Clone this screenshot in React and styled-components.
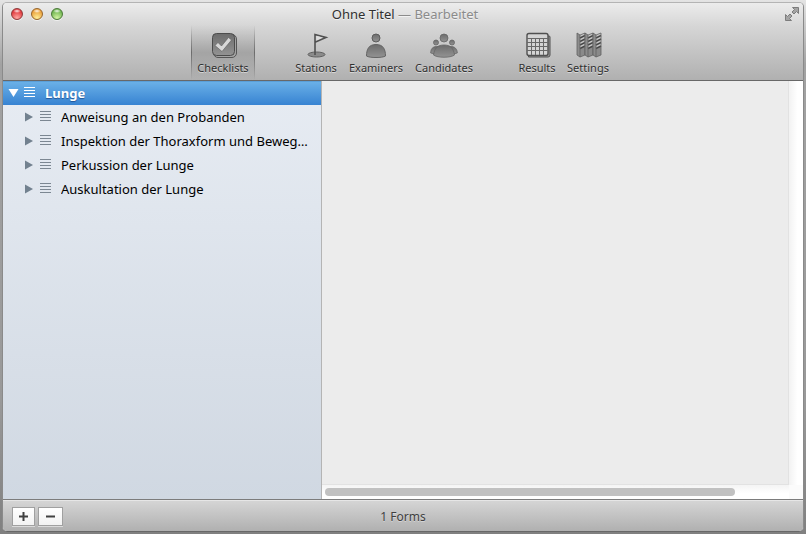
import React, { useState } from "react";
import styled, { createGlobalStyle, css } from "styled-components";

const GlobalStyle = createGlobalStyle`
  *, *::before, *::after { box-sizing: border-box; }
  body {
    margin: 0;
    background: linear-gradient(#e4e4e4, #a2a2a2 12%, #999 75%, #808080);
    font-family: "Noto Sans", "Open Sans", sans-serif;
    font-size: 13px;
    color: #000;
  }
  button { font: inherit; color: inherit; margin: 0; }
`;

const Desktop = styled.div`
  display: flex;
  height: 100vh;
  padding: 2px;
`;

const Window = styled.div`
  display: flex;
  flex-direction: column;
  flex: 1;
  min-width: 0;
  border: 1px solid #8a8a8a;
  border-top-color: #b4b4b4;
  border-bottom-color: #686868;
  border-radius: 5px;
  overflow: hidden;
  background: #ececec;
`;

const Header = styled.header`
  display: flex;
  flex-direction: column;
  height: 78px;
  flex: none;
  background: linear-gradient(#ececec, #d6d6d6 30%, #b0b0b0);
  border-bottom: 1px solid #686868;
`;

const TitleBar = styled.div`
  display: grid;
  grid-template-columns: 1fr auto 1fr;
  align-items: center;
  height: 22px;
  padding: 0 4px 0 8px;
`;

const Lights = styled.div`
  display: flex;
  gap: 8px;
`;

const Light = styled.button`
  display: block;
  width: 12px;
  height: 12px;
  padding: 0;
  border: 1px solid ${(p) => p.$edge};
  border-radius: 50%;
  background:
    radial-gradient(ellipse 4px 2px at 50% 20%, rgba(255, 255, 255, 0.9), transparent),
    radial-gradient(circle at 50% 90%, ${(p) => p.$glow}, ${(p) => p.$tone} 75%);
  box-shadow: 0 1px 0 rgba(255, 255, 255, 0.6);
`;

const Title = styled.h1`
  margin: 0;
  font-size: 13px;
  line-height: 20px;
  font-weight: 400;
  color: #303030;
  text-shadow: 0 1px 0 rgba(255, 255, 255, 0.6);
`;

const Edited = styled.span`
  color: #8b8b8b;
`;

const FullScreen = styled.button`
  justify-self: end;
  display: block;
  padding: 0;
  border: 0;
  background: none;
  height: 14px;
`;

const Toolbar = styled.nav`
  display: grid;
  grid-template-columns: 64px 31px 60px 60px 76px 31px 48px 54px;
  justify-content: center;
  flex: 1;
`;

const Tool = styled.button`
  display: flex;
  flex-direction: column;
  align-items: center;
  grid-column: ${(p) => p.$column};
  padding: 5px 0 0;
  border: 0;
  background: none;
  font-size: 11px;
  line-height: 16px;
  color: #303030;
  text-shadow: 0 1px 0 rgba(255, 255, 255, 0.5);
  white-space: nowrap;
  svg { display: block; margin-bottom: 2px; }
  ${(p) =>
    p.$active &&
    css`
      background:
        linear-gradient(rgba(70, 70, 70, 0), rgba(70, 70, 70, 0.6) 50%, rgba(70, 70, 70, 0)) left / 1px 100% no-repeat,
        linear-gradient(rgba(70, 70, 70, 0), rgba(70, 70, 70, 0.6) 50%, rgba(70, 70, 70, 0)) right / 1px 100% no-repeat,
        linear-gradient(rgba(0, 0, 0, 0), rgba(0, 0, 0, 0.16) 50%, rgba(0, 0, 0, 0));
    `}
`;

const Main = styled.main`
  display: grid;
  grid-template-columns: 319px minmax(0, 1fr);
  flex: 1;
  min-height: 0;
`;

const Sidebar = styled.ul`
  margin: 0;
  padding: 0;
  list-style: none;
  border-right: 1px solid #b4b4b4;
  background: linear-gradient(#e7ecf3, #d0d8e2);
`;

const Row = styled.li`
  display: flex;
  align-items: center;
  height: 24px;
  padding: 0 4px 0 ${(p) => (p.$root ? 4 : 20)}px;
  ${(p) =>
    p.$root &&
    css`
      color: #fff;
      font-weight: 700;
      text-shadow: 0 1px 1px rgba(0, 30, 90, 0.5);
      background: linear-gradient(#6cb2e8, #3783d2);
      box-shadow: inset 0 1px 0 #5a9fd8;
    `}
`;

const Disclosure = styled.button`
  display: block;
  flex: none;
  width: 12px;
  height: 12px;
  padding: 0;
  border: 0;
  background: none;
  color: ${(p) => (p.$root ? "#fff" : "#72818f")};
  svg { display: block; }
`;

const ListMark = styled.svg`
  flex: none;
  margin: 0 9px 0 5px;
  color: ${(p) => (p.$root ? "#fff" : "#7c8792")};
`;

const RowLabel = styled.span`
  min-width: 0;
  font-size: 13px;
  line-height: 20px;
  overflow: hidden;
  text-overflow: ellipsis;
  white-space: nowrap;
`;

const Content = styled.section`
  display: grid;
  grid-template: minmax(0, 1fr) 14px / minmax(0, 1fr) 14px;
  background: #fbfbfb;
`;

const Canvas = styled.div`
  background: #ececec;
  border: solid #e2e2e2;
  border-width: 0 1px 1px 0;
`;

const VerticalTrack = styled.div`
  background: linear-gradient(90deg, #f2f2f2, #fff 60%);
`;

const HorizontalTrack = styled.div`
  padding: 3px;
  background: linear-gradient(#f4f4f4, #fff 60%);
`;

const Thumb = styled.div`
  width: 89%;
  height: 8px;
  border-radius: 4px;
  background: #c1c1c1;
`;

const Footer = styled.footer`
  display: grid;
  grid-template-columns: 1fr auto 1fr;
  align-items: center;
  flex: none;
  height: 32px;
  padding: 2px 9px 0;
  border-top: 1px solid #7c7c7c;
  background: linear-gradient(#d6d6d6, #b0b0b0);
  box-shadow: inset 0 1px 0 #e6e6e6;
`;

const Actions = styled.div`
  display: flex;
  gap: 3px;
`;

const SquareButton = styled.button`
  display: flex;
  align-items: center;
  justify-content: center;
  width: ${(p) => p.$width}px;
  height: 19px;
  padding: 0;
  border: 1px solid #a0a0a0;
  background: linear-gradient(#fff, #f2f2f2);
  box-shadow: 0 1px 0 rgba(255, 255, 255, 0.5);
`;

const Status = styled.span`
  font-size: 12px;
  line-height: 16px;
  color: #404040;
  text-shadow: 0 1px 0 rgba(255, 255, 255, 0.4);
`;

const IconFrame = ({ children }) => (
  <svg width="28" height="28" viewBox="0 0 28 28" aria-hidden="true">
    <defs>
      <linearGradient id="metal" x1="0" y1="0" x2="0" y2="1">
        <stop offset="0" stopColor="#6c6c6c" />
        <stop offset="1" stopColor="#939393" />
      </linearGradient>
    </defs>
    {children}
  </svg>
);

const ChecklistIcon = () => (
  <IconFrame>
    <rect x="4.5" y="4.5" width="23" height="23" rx="4.5" fill="#a4a4a4" stroke="#555" />
    <rect x="3.5" y="3.5" width="22" height="22" rx="4" fill="url(#metal)" stroke="#4c4c4c" />
    <path d="M6 15.5l3-3 3.5 3.500 7-8.500 3 2.500L13 21.500z" fill="#d8d8d8" stroke="#5c5c5c" strokeWidth=".6" />
  </IconFrame>
);

const StationIcon = () => (
  <IconFrame>
    <ellipse cx="14.5" cy="24.5" rx="8.5" ry="2.5" fill="#8b8b8b" stroke="#606060" />
    <path d="M13 25V4.500L24 7.500 13.500 12" fill="none" stroke="#505050" strokeWidth="1.6" />
    <path d="M14.500 6l6 1.600-6 2.800z" fill="#ddd" />
  </IconFrame>
);

const ExaminerIcon = () => (
  <IconFrame>
    <circle cx="14" cy="8" r="4" fill="url(#metal)" stroke="#5c5c5c" />
    <path d="M4.500 26c0-7 2.500-11.500 9.500-11.500S23.500 19 23.500 26c-3 2-16 2-19 0z" fill="url(#metal)" stroke="#646464" />
  </IconFrame>
);

const CandidateIcon = () => (
  <IconFrame>
    <g fill="url(#metal)" stroke="#666" strokeWidth=".8">
      <circle cx="6" cy="12.5" r="2.5" />
      <circle cx="22" cy="12.5" r="2.5" />
      <path d="M.7 23c0-4 2-6.500 6-6.500S12 19 12 23c-2 1-9 1-11.300 0z" />
      <path d="M16 23c0-4 2-6.500 5.300-6.500s6 2.500 6 6.500c-2 1-9 1-11.300 0z" />
      <path d="M3.500 25c1-7 4-10 10.500-10s9.500 3 10.500 10c-4 3-17 3-21 0z" />
      <circle cx="14" cy="8" r="4" />
    </g>
  </IconFrame>
);

const ResultsIcon = () => (
  <IconFrame>
    <path d="M5.500 6h20.500a1 1 0 0 1 1 1v18a2 2 0 0 1-2 2h-19.500z" fill="#999" stroke="#505050" />
    <rect x="4" y="3.500" width="21" height="22" rx="2" fill="#d4d4d4" stroke="#505050" strokeWidth="1.400" />
    <path
      d="M4 8.500h21M4 12.500h21M4 16.500h21M4 20.500h21M8.500 8v17M12.500 8v17M16.500 8v17M20.500 8v17"
      stroke="#686868"
      fill="none"
    />
  </IconFrame>
);

const SettingsIcon = () => (
  <IconFrame>
    {[3, 11, 19].map((x) => (
      <g key={x}>
        <path d={`M${x} 3l3 2v22l-3-2z`} fill="#8c8c8c" />
        <path d={`M${x + 3} 5l5-2v22l-5 2z`} fill="#c8c8c8" />
        <path d={`M${x + 3} 19l5-3v9l-5 2z`} fill="#8a8a8a" />
        <path
          d={`M${x + 3} 8l5-2.500M${x + 3} 11.500l5-2.500M${x + 3} 15l5-2.500M${x + 3} 18.500l5-2.500`}
          stroke="#484848"
          strokeWidth="1.500"
        />
        <path d={`M${x} 3l3 2 5-2v22l-5 2-3-2zM${x + 3} 5v22`} fill="none" stroke="#606060" strokeWidth=".8" />
      </g>
    ))}
  </IconFrame>
);

const TOOLS = [
  { name: "Checklists", Icon: ChecklistIcon, column: 1 },
  { name: "Stations", Icon: StationIcon, column: 3 },
  { name: "Examiners", Icon: ExaminerIcon, column: 4 },
  { name: "Candidates", Icon: CandidateIcon, column: 5 },
  { name: "Results", Icon: ResultsIcon, column: 7 },
  { name: "Settings", Icon: SettingsIcon, column: 8 },
];

const ROWS = [
  "Anweisung an den Probanden",
  "Inspektion der Thoraxform und Beweg…",
  "Perkussion der Lunge",
  "Auskultation der Lunge",
];

function OutlineRow({ label, root, open, onToggle }) {
  return (
    <Row $root={root}>
      <Disclosure $root={root} aria-label={label} aria-expanded={open} onClick={onToggle}>
        <svg width="12" height="12" viewBox="0 0 12 12" fill="currentColor">
          <path d={open ? "M1.500 2h10L6.500 10z" : "M2 1.500v9L10 6z"} />
        </svg>
      </Disclosure>
      <ListMark $root={root} width="12" height="14" viewBox="0 0 12 14" aria-hidden="true">
        <path d="M0 1.500h11M0 4.500h11M0 7.500h11M0 10.500h11" stroke="currentColor" />
      </ListMark>
      <RowLabel>{label}</RowLabel>
    </Row>
  );
}

export default function App() {
  const [active, setActive] = useState("Checklists");
  const [open, setOpen] = useState(true);
  return (
    <>
      <GlobalStyle />
      <Desktop>
        <Window>
          <Header>
            <TitleBar>
              <Lights>
                <Light aria-label="Close" $edge="#8d3a3a" $glow="#ffaaa5" $tone="#df3035" />
                <Light aria-label="Minimize" $edge="#96652c" $glow="#fff09a" $tone="#e99b35" />
                <Light aria-label="Zoom" $edge="#4b7838" $glow="#d6f5a5" $tone="#69b14b" />
              </Lights>
              <Title>
                Ohne Titel <Edited>— Bearbeitet</Edited>
              </Title>
              <FullScreen aria-label="Full screen">
                <svg width="14" height="14" viewBox="0 0 14 14" fill="#a4a4a4" stroke="#7c7c7c">
                  <path d="M7.500 .5h6V6.500l-2-2-2.500 2.500L7 5l2.500-2.500z" />
                  <path d="M.5 7.500v6h6l-2-2L7 9 5 7 2.500 9.500z" />
                </svg>
              </FullScreen>
            </TitleBar>
            <Toolbar>
              {TOOLS.map(({ name, Icon, column }) => (
                <Tool
                  key={name}
                  $column={column}
                  $active={active === name}
                  onClick={() => setActive(name)}
                >
                  <Icon />
                  {name}
                </Tool>
              ))}
            </Toolbar>
          </Header>
          <Main>
            <Sidebar>
              <OutlineRow label="Lunge" root open={open} onToggle={() => setOpen(!open)} />
              {open && ROWS.map((label) => <OutlineRow key={label} label={label} open={false} />)}
            </Sidebar>
            <Content>
              <Canvas />
              <VerticalTrack />
              <HorizontalTrack>
                <Thumb />
              </HorizontalTrack>
            </Content>
          </Main>
          <Footer>
            <Actions>
              <SquareButton $width={23} aria-label="Add">
                <svg width="9" height="9" viewBox="0 0 9 9" aria-hidden="true">
                  <path d="M4.500 0v9M0 4.500h9" stroke="#404040" strokeWidth="2" />
                </svg>
              </SquareButton>
              <SquareButton $width={25} aria-label="Remove">
                <svg width="9" height="9" viewBox="0 0 9 9" aria-hidden="true">
                  <path d="M0 4.500h9" stroke="#404040" strokeWidth="2" />
                </svg>
              </SquareButton>
            </Actions>
            <Status>1 Forms</Status>
          </Footer>
        </Window>
      </Desktop>
    </>
  );
}
